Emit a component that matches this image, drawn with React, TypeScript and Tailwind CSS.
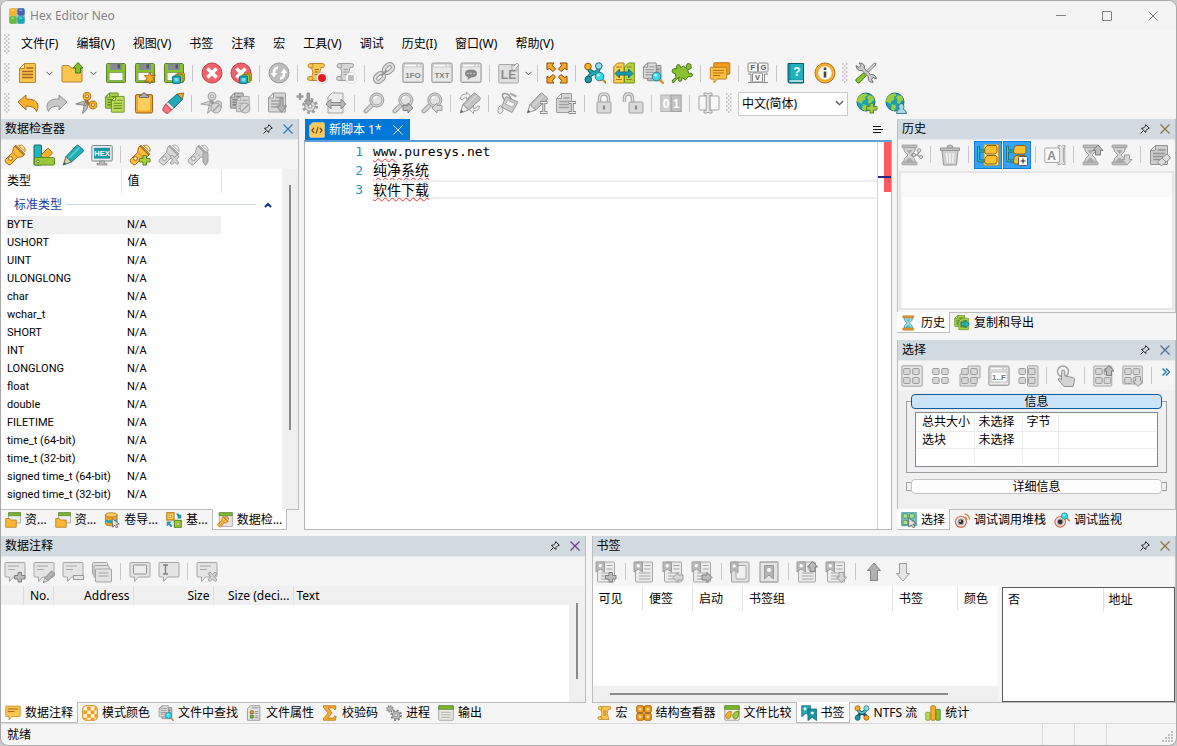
import { ReactNode } from "react";
import clsx from "clsx";

type Tone = { f: string; s: string; l?: string };

const GRAY: Tone = { f: "#d6d6d6", s: "#9c9c9c", l: "#a0a0a0" };
const DARK: Tone = { f: "#bcbcbc", s: "#7d7d7d", l: "#6f6f6f" };
const GOLD: Tone = { f: "#fbc64f", s: "#b9852c", l: "#a8641c" };
const LIME: Tone = { f: "#a5cf43", s: "#5d8a20", l: "#4c7a14" };
const TEAL: Tone = { f: "#1fb0b8", s: "#17707c", l: "#17707c" };

/* ---------- icon parts, all drawn on a 22x22 grid ---------- */

function At({ x = 0, y = 0, k = 1, children }: { x?: number; y?: number; k?: number; children: ReactNode }) {
  return <g transform={`translate(${x} ${y}) scale(${k})`}>{children}</g>;
}

function Page({ t, w = 16, h = 20 }: { t: Tone; w?: number; h?: number }) {
  return (
    <g>
      <path d={`M5.5.5H${w - 1}q.5 0 .5.5V${h - 1}q0 .5-.5.5H1q-.5 0-.5-.5V5.5z`} fill={t.f} stroke={t.s} />
      <path d="M5.5.5v5h-5z" fill="#fff" fillOpacity=".5" stroke={t.s} />
      <path d={`M7.5 5h${w - 10}M3 8.500h${w - 6}M3 11.500h${w - 6}M3 14.500h${w - 6}`} stroke={t.l} strokeWidth="1.400" />
    </g>
  );
}

function Floppy() {
  return (
    <g>
      <path d="M2.500 1.500h17l1 1v17q0 1-1 1h-17q-1 0-1-1v-17q0-1 1-1z" fill="#86c232" stroke="#5b7f2b" />
      <path d="M5 1.500h12v6.500H5z" fill="#858a90" />
      <path d="M12.500 2.500h2.500v4h-2.500z" fill="#53585e" />
      <path d="M4 10.500h14v8H4z" fill="#fbfbf4" stroke="#8aa564" />
    </g>
  );
}

function Cubes() {
  return (
    <g strokeWidth=".8">
      <rect x="14" y="11" width="7.500" height="8" rx="1" fill="#f6a21b" stroke="#9c6412" />
      <rect x="12" y="12.500" width="8" height="8" rx="1" fill="#8fc63a" stroke="#55801c" />
      <rect x="9.500" y="14" width="8" height="7.500" rx="1" fill="#1aa6be" stroke="#10647a" />
      <rect x="11.500" y="16" width="4" height="3.500" fill="#7fdbe8" />
    </g>
  );
}

function Scroll({ t }: { t: Tone }) {
  return (
    <g fill={t.f} stroke={t.s} strokeLinejoin="round">
      <path d="M5 1.500h11.500q2 0 2 2t-2 2H15q-2.500 5 0 9.500l1 3.500H4.500q-3 0-3-2t2.500-2h2Q8 10 5.500 6z" />
      <path d="M5 1.500q-3 0-3 2.300t3 2.200q2 0 2-2.200T5 1.500zM4.500 18.500q2.500 0 2.500-2t-2.500-2" />
      <path d="M8.500 7.500h4.500M8.500 10h4M8.500 12.500h4" stroke={t.l} />
    </g>
  );
}

function Scissors({ a, b }: { a: Tone; b: Tone }) {
  return (
    <g>
      <path d="M.8 12l9-3 3.500 2.500-2 2zM7.500 21.500L9.800 10.500l3.500 1-1.500 6z" fill={a.f} stroke={a.s} strokeWidth=".9" strokeLinejoin="round" />
      <path d="M11 7.500l2 4 3 .5" stroke={b.s} strokeWidth="3" fill="none" />
      <g fill="none" stroke={b.s} strokeWidth="3.400">
        <circle cx="12" cy="4.300" r="2.700" />
        <circle cx="18" cy="13" r="2.700" />
      </g>
      <g fill="none" stroke={b.f} strokeWidth="1.700">
        <circle cx="12" cy="4.300" r="2.700" />
        <circle cx="18" cy="13" r="2.700" />
      </g>
    </g>
  );
}

function Pencil({ body, tip }: { body: Tone; tip: string }) {
  return (
    <g strokeLinejoin="round" strokeWidth=".9">
      <path d="M4 12.500L14.500 1.500q1-1 2 0l4.500 4q1 1 0 2.200L9.500 18z" fill={body.f} stroke={body.s} />
      <path d="M4 12.500l5.500 5.500-8.300 3z" fill={tip} stroke={body.s} />
      <path d="M6.500 14.500L17.500 3.500" stroke="#fff" strokeOpacity=".35" strokeWidth="1.500" />
      <path d="M1.200 21l1.200-3 1.800 1.800z" fill="#555" />
    </g>
  );
}

function Lens({ t = GRAY, glass = "#e2e2e2" }: { t?: Tone; glass?: string }) {
  return (
    <g>
      <path d="M8.500 13.500L2.800 19.200" stroke={t.s} strokeWidth="4.500" strokeLinecap="round" />
      <path d="M8.500 13.500L2.800 19.200" stroke={t.f} strokeWidth="2.500" strokeLinecap="round" />
      <circle cx="13.800" cy="8" r="7" fill={t.f} stroke={t.s} />
      <circle cx="13.800" cy="8" r="5" fill={glass} stroke={t.s} strokeWidth=".8" />
      <path d="M11 7q.5-2 3-2.300" fill="none" stroke="#fff" strokeWidth="1.300" />
    </g>
  );
}

// magnifier with the handle to the lower right
function MiniLens() {
  return (
    <g>
      <path d="M17.500 17.500l3.500 3.500" stroke="#e08a1a" strokeWidth="2.400" strokeLinecap="round" />
      <circle cx="14.500" cy="14.500" r="4.300" fill="#33dcec" stroke="#2b7f96" />
      <circle cx="13.500" cy="13.200" r="1.300" fill="#d7fbff" />
    </g>
  );
}

function Plus({ t = LIME }: { t?: Tone }) {
  return <path d="M14 11.500h3.500V14.500h3.500V18h-3.500v3H14v-3h-3.500v-3.500H14z" fill={t.f} stroke={t.s} />;
}

function Cross() {
  return <path d="M12 12.500l2-1.500 2.500 2.500L19 11l2 1.500-2.500 3.200 2.500 3.300-2 1.500-2.500-2.500L14 20.500l-2-1.500 2.500-3.300z" fill="#d0d0d0" stroke="#a0a0a0" />;
}

function Up({ t = DARK }: { t?: Tone }) {
  return <path d="M5 0l5 5.500H7.500V10h-5V5.500H0z" fill={t.f} stroke={t.s} strokeLinejoin="round" />;
}

function Down({ t = GRAY }: { t?: Tone }) {
  return <path d="M5 10l5-5.500H7.500V0h-5v4.500H0z" fill={t.f} stroke={t.s} strokeLinejoin="round" />;
}

function Right({ t = DARK }: { t?: Tone }) {
  return <path d="M10 5L5 10V7.500H0v-5h5V0z" fill={t.f} stroke={t.s} strokeLinejoin="round" />;
}

function Left({ t = GRAY }: { t?: Tone }) {
  return <path d="M0 5l5 5V7.500h5v-5H5V0z" fill={t.f} stroke={t.s} strokeLinejoin="round" />;
}

function Ban() {
  return (
    <g fill="#d6d6d6" stroke="#a3a3a3">
      <circle cx="16" cy="16" r="5" />
      <path d="M12.500 19.500l7-7" strokeWidth="1.500" />
    </g>
  );
}

function Torch({ t, beam }: { t: Tone; beam: string }) {
  return (
    <g strokeLinejoin="round">
      <path d="M14.500 1.500q3-1.500 5.200 1t1.300 5z" fill={beam} stroke={t.s} strokeWidth=".8" />
      <path d="M1.500 15.500L8.500 8.500l1-5 2.500-2.300 8.800 8.800-2.300 2.500-5 1-7 7q-1.500 1-3-.5l-2-2q-.8-1.500 0-2.500z" fill={t.f} stroke={t.s} />
      <path d="M11 2l9 9" stroke={t.s} strokeWidth="1.200" />
      <path d="M9 8.500l4.500 4.500" stroke={t.s} strokeWidth=".8" />
      <circle cx="6.500" cy="14.500" r="2" fill="#fff" fillOpacity=".6" stroke={t.s} />
    </g>
  );
}

function Windowed({ children }: { children: ReactNode }) {
  return (
    <g>
      <rect x=".8" y="1" width="20.400" height="19.500" rx="1.500" fill="#d0d0d0" stroke="#a0a0a0" />
      <path d="M2 5.500h18v13.500H2z" fill="#e9e9e9" />
      <path d="M3 3.500h11M16 3.500h1.500M19 3.500h.5" stroke="#fff" strokeWidth="1.500" />
      {children}
    </g>
  );
}

function Globe() {
  return (
    <g>
      <circle cx="10" cy="10" r="9" fill="#1c9ebd" stroke="#17697c" />
      <path d="M3 4.500q3-3.500 7-3l1.500 2L9 5l.5 2.500-3 1.500-1 3-2.500-1.500-2-1q0-3 2-5zM13 3l4 1.500 1.500 4-2.500.5-1.500 3.500-2.500-2 .5-3-1.500-2zM7 12l4 1.500-.5 3L8.500 19l-2.500-2z" fill="#9bd03c" />
    </g>
  );
}

function Bubble({ t = GRAY }: { t?: Tone }) {
  return <path d="M2 1.500h18q1 0 1 1V15q0 1-1 1H9.500l-4 4.500V16H2q-1 0-1-1V2.500q0-1 1-1z" fill={t.f} stroke={t.s} strokeLinejoin="round" />;
}

const PALE: Tone = { f: "#e4e4e4", s: "#a6a6a6" };

function Folder({ t = GOLD }: { t?: Tone }) {
  return <path d="M1 4.500q0-1 1-1h6l2 2.500h10q1 0 1 1v12q0 1-1 1H2q-1 0-1-1z" fill={t.f} stroke={t.s} />;
}

function Hourglass({ t = GRAY, cap }: { t?: Tone; cap?: string }) {
  return (
    <g>
      <path d="M4 3.500h12q0 4.500-4.500 7.500Q16 14 16 18.500H4Q4 14 8.500 11 4 8 4 3.500z" fill={t.f} stroke={t.s} />
      <path d="M7 6h6l-3 4zM6 18q1-3 4-4.500Q13 15 14 18z" fill={cap ? "#4fc3cf" : "#a9a9a9"} />
      <rect x="2.500" y="1" width="15" height="2.800" rx=".6" fill={cap ?? "#bdbdbd"} stroke={cap ? "#a86a14" : "#999"} strokeWidth=".8" />
      <rect x="2.500" y="18" width="15" height="2.800" rx=".6" fill={cap ?? "#bdbdbd"} stroke={cap ? "#a86a14" : "#999"} strokeWidth=".8" />
    </g>
  );
}

function Cells({ t = GRAY, gap = 10 }: { t?: Tone; gap?: number }) {
  return (
    <g fill={t.f} stroke={t.s}>
      <rect x="3.500" y="3.500" width="6.500" height="6" rx="1" />
      <rect x={gap + 3.5} y="3.500" width="6.500" height="6" rx="1" />
      <rect x="3.500" y="12.500" width="6.500" height="6" rx="1" />
      <rect x={gap + 3.5} y="12.500" width="6.500" height="6" rx="1" />
    </g>
  );
}

function Mark({ t = GRAY }: { t?: Tone }) {
  return (
    <g>
      <rect x="2.500" y="1" width="17" height="20" rx="1" fill="#ebebeb" stroke="#a6a6a6" />
      <path d="M11.500 4.500h6M11.500 8h6M6 12h11.500M6 15h11.500M6 18h11.500" stroke="#a6a6a6" />
      <path d="M1 1h8.500v10L5.200 8 1 11z" fill="#b8b8b8" stroke={t.s} />
      <circle cx="5.200" cy="4.800" r="1.700" fill="#fff" />
    </g>
  );
}

function Tree({ plus }: { plus?: boolean }) {
  return (
    <g>
      {!plus && <rect x="7" y=".8" width="14.500" height="20.400" rx="1" fill="#fff2b8" stroke="#c79a2c" />}
      <path d="M1.500 2v13.500q0 1.500 1.500 1.500H9M2 7h7" fill="none" stroke="#1b6d72" strokeWidth="3" />
      <path d="M1.500 2.500v13q0 1.500 1.500 1.500H8M2 7h6" fill="none" stroke="#3cc7c4" strokeWidth="1.200" />
      <path d="M8 4l2-2.500h9l1 1.500v5.500L18 10H9L7.500 8z" fill="#fbc02d" stroke="#8f5f10" />
      <path d="M8 14l2-2.500h9l1 1.500v5.500L18 20H9L7.500 18z" fill="#fbc02d" stroke="#8f5f10" />
      {plus && (
        <g>
          <rect x="12.500" y="12.500" width="9" height="9" rx="1" fill="#fff" stroke="#555" />
          <path d="M17 14.500v5M14.500 17h5" stroke="#222" />
        </g>
      )}
    </g>
  );
}

function GearShape({ t = DARK }: { t?: Tone }) {
  return (
    <g>
      <circle cx="12" cy="12" r="6" fill="none" stroke={t.s} strokeWidth="4" strokeDasharray="2.400 2.300" />
      <circle cx="12" cy="12" r="5.300" fill={t.f} stroke={t.s} />
      <circle cx="12" cy="12" r="2" fill="#f5f5f5" stroke={t.s} />
    </g>
  );
}

const label = "font-[Liberation_Sans,sans-serif] font-bold";

const icons: Record<string, ReactNode> = {
  logo: (
    <g>
      <rect x="0" y="0" width="22" height="22" rx="3" fill="#2f6f4b" fillOpacity=".35" />
      <rect x=".5" y=".5" width="10" height="10" rx="2.500" fill="#f5b324" />
      <rect x="11.500" y=".5" width="10" height="10" rx="2.500" fill="#4861b8" />
      <rect x=".5" y="11.500" width="10" height="10" rx="2.500" fill="#67b93a" />
      <rect x="11.500" y="11.500" width="10" height="10" rx="2.500" fill="#1ba7b9" />
      <path d="M3 3h4M14 3h4M3 14h4M14 14h4" stroke="#fff" strokeOpacity=".45" strokeWidth="2" />
    </g>
  ),
  newFile: <At x={2} y={1}><Page t={GOLD} w={17} /></At>,
  open: (
    <g>
      <Folder />
      <path d="M17 .5l5 5.500h-2.500v5h-5V6H12z" fill="#7fc02e" stroke="#3c7d14" />
    </g>
  ),
  save: <Floppy />,
  saveAs: (
    <g>
      <Floppy />
      <path d="M16 10l1.300 3.800 4.200-.6-2.800 3 2.500 3.800-3.700-1.200L16 22l-1.500-3.200-4 1 2.300-3.500-2.600-3 4 .5z" fill="#f9a825" stroke="#9a5f12" strokeWidth=".8" />
    </g>
  ),
  saveAll: <g><Floppy /><Cubes /></g>,
  close: (
    <g>
      <circle cx="11" cy="11" r="10" fill="#f0616b" stroke="#b4464e" />
      <path d="M6.500 6.500l9 9M15.500 6.500l-9 9" stroke="#fff" strokeWidth="3.600" />
    </g>
  ),
  closeAll: (
    <g>
      <circle cx="11" cy="11" r="10" fill="#f0616b" stroke="#b4464e" />
      <path d="M6.500 6.500l9 9M15.500 6.500l-9 9" stroke="#fff" strokeWidth="3.600" />
      <Cubes />
    </g>
  ),
  refresh: (
    <g>
      <circle cx="11" cy="11" r="10" fill="#bdbdbd" stroke="#9b9b9b" />
      <path d="M10 5.500Q5.500 6 6 12M12 16.500q4.500-.5 4-6.500" fill="none" stroke="#fff" strokeWidth="2.500" />
      <path d="M2.800 11h6.400L6 15.500zM12.800 11h6.400L16 6.500z" fill="#fff" />
    </g>
  ),
  record: (
    <g>
      <Scroll t={GOLD} />
      <circle cx="16" cy="16" r="5.500" fill="#fff" stroke="#c9c9c9" strokeWidth=".8" />
      <circle cx="16" cy="16" r="4" fill="#e31b23" />
    </g>
  ),
  recordStop: (
    <g>
      <Scroll t={GRAY} />
      <circle cx="16" cy="16" r="5.500" fill="#fff" stroke="#d4d4d4" strokeWidth=".8" />
      <rect x="13" y="13" width="6" height="6" fill="#bdbdbd" />
    </g>
  ),
  link: (
    <g fill="none">
      <g stroke="#949494" strokeWidth="4.200">
        <rect x="-5" y="-3.200" width="10" height="6.400" rx="3.200" transform="translate(15.500 6.500) rotate(-42)" />
        <rect x="-5" y="-3.200" width="10" height="6.400" rx="3.200" transform="translate(6.500 15.500) rotate(-42)" />
      </g>
      <g stroke="#dedede" strokeWidth="2.200">
        <rect x="-5" y="-3.200" width="10" height="6.400" rx="3.200" transform="translate(15.500 6.500) rotate(-42)" />
        <rect x="-5" y="-3.200" width="10" height="6.400" rx="3.200" transform="translate(6.500 15.500) rotate(-42)" />
      </g>
      <path d="M8 13.500l6-5" stroke="#949494" strokeWidth="2" />
    </g>
  ),
  info1fo: <Windowed><text x="11" y="15.500" textAnchor="middle" fontSize="8" fill="#808080" className={label}>1FO</text></Windowed>,
  txt: <Windowed><text x="11" y="15.500" textAnchor="middle" fontSize="8" fill="#808080" className={label}>TXT</text></Windowed>,
  chatWin: (
    <Windowed>
      <path d="M11 7.500q6 0 6 4t-6 4l-3.500 2.500.5-3q-3-.5-3-3.500 0-4 6-4z" fill="#858585" />
      <path d="M7.500 11.500h1M10.500 11.500h1M13.500 11.500h1" stroke="#eee" strokeWidth="1.500" />
    </Windowed>
  ),
  endian: (
    <g>
      <rect x=".8" y="2.500" width="19.500" height="18.500" rx="1" fill="#e0e0e0" stroke="#a6a6a6" />
      <text x="10.500" y="17" textAnchor="middle" fontSize="12" fill="#8d8d8d" className={label}>LE</text>
      <path d="M14 8V2.500l1.800 1.800L19 1l2 2-3.300 3.200L19.500 8z" fill="#f0f0f0" stroke="#9a9a9a" strokeWidth=".9" />
    </g>
  ),
  expand: (
    <g fill="#f9a825" stroke="#8a4b12" strokeLinejoin="round">
      {[0, 90, 180, 270].map((a) => (
        <path key={a} transform={`rotate(${a} 11 11)`} d="M1 1H8L6.300 3.300 9.500 7 7 9.500 3.300 6.300 1 8z" />
      ))}
    </g>
  ),
  structure: (
    <g>
      <path d="M4.500 5Q5 10.500 11 11q5.500.5 6.500 5M15 5q-.5 5-4 6-5.500 1-6.500 5.500" fill="none" stroke="#14616d" strokeWidth="4" />
      <path d="M4.500 5Q5 10.500 11 11M15 5q-.5 5-4 6-5.500 1-6.500 5.500" fill="none" stroke="#1fa7b4" strokeWidth="2.400" />
      <circle cx="4" cy="4.500" r="3.300" fill="#fbab27" stroke="#8d5913" />
      <circle cx="14.800" cy="4" r="3.300" fill="#8ddbe3" stroke="#236f82" />
      <circle cx="4.300" cy="17.500" r="3.300" fill="#1a9aa7" stroke="#0f5763" />
      <At x={1} y={0}><MiniLens /></At>
    </g>
  ),
  compare: (
    <g>
      <path d="M4.500 1H11v20H.8V4.800z" fill="#ffd34f" stroke="#a87c1d" />
      <path d="M15.500 1H21.300v20H11.500V5z" fill="#b4d33f" stroke="#71911f" />
      <path d="M3 5h6M14 5h5M3 17.500h6M13.500 17.500h5.500" stroke="#a87c1d" />
      <path d="M2 11.500L6.500 7v3h9V7l4.500 4.500L15.500 16v-3h-9v3z" fill="#14a0b0" stroke="#0f5e6b" strokeWidth=".8" />
    </g>
  ),
  findFiles: (
    <g>
      <At x={5} y={3} k={0.85}><Page t={DARK} w={17} h={19} /></At>
      <At x={1} y={0.5} k={0.85}><Page t={{ f: "#dcdcdc", s: "#808080", l: "#909090" }} w={16} h={19} /></At>
      <MiniLens />
    </g>
  ),
  puzzle: <path d="M2 7l4-.5q-1.500-3.500 1-4 2.500-.2 2.500 3.300L12.500 4l3 2.500q.5-1-.3-3Q16 1 18 1.500q3 .8 2 3.300 1.500 1.500-1.500 2.500l-2 .3 1.500 4.200q2-1.500 3.200.2.800 2.200-1 2.800-1.500.3-2.500-.8L14.500 18l-3.300-2.500q-.2 2.500-1 3.500-2 1-3-1 0-2 1.300-3L4.500 18q-1 3-3 2.500-1-1.500.5-3l3-1.500-.5-4Q1 11 1 9z" fill="#86c232" stroke="#4c7d1a" />,
  comments: (
    <g>
      <At x={4} y={-0.5} k={0.8}><Bubble t={{ f: "#f39c1f", s: "#a0640f" }} /></At>
      <At x={0.5} y={4} k={0.82}><Bubble t={{ f: "#ffbe3b", s: "#b0701a" }} /></At>
      <path d="M4 8.500h11M4 11h11M4 13.500h7" stroke="#b5701a" />
    </g>
  ),
  keys: (
    <g>
      <g fill="#f7f7f7" stroke="#8c8c8c">
        <rect x="1" y="1" width="9.500" height="9" rx="1" />
        <rect x="11.500" y="1" width="9.500" height="9" rx="1" />
        <rect x="5.500" y="11" width="10" height="9" rx="1" />
        <path d="M1 20.500h3V12H1M21 20.500h-3.500V12H21M3 20.500h16" fill="none" />
      </g>
      <g fontSize="7.500" fill="#555" textAnchor="middle" className={label}>
        <text x="5.800" y="8.200">F</text>
        <text x="16.300" y="8.200">G</text>
        <text x="10.500" y="18.200">V</text>
      </g>
    </g>
  ),
  help: (
    <g>
      <path d="M3 1.500h15.500V21H4.500q-1.500 0-1.500-2z" fill="#16919e" stroke="#0d5865" />
      <path d="M5.500 2H18v15.500H5.500z" fill="#1fb2bb" />
      <path d="M4.500 19h13.500" stroke="#d8f4f4" strokeWidth="1.500" />
      <text x="11.800" y="14" textAnchor="middle" fontSize="12" fill="#fff" className={label}>?</text>
    </g>
  ),
  about: (
    <g>
      <circle cx="11" cy="11" r="10" fill="#fbb02d" stroke="#b3741a" />
      <circle cx="11" cy="11" r="7.200" fill="#fffdf5" stroke="#d69a34" strokeWidth=".7" />
      <path d="M11 5.500v2.500" stroke="#444" strokeWidth="2.600" />
      <path d="M11 9.500v6" stroke="#444" strokeWidth="2.600" />
    </g>
  ),
  tools: (
    <g strokeLinejoin="round">
      <path d="M21 1.500l-1.500-.5L12 8.500l1.500 1.500 7-7z" fill="#ddd" stroke="#777" />
      <path d="M1 3.500l3 2 1.800-1.800L4 1q4-.5 5.500 3l-.3 2.300 6.300 6.300q4-.8 5.500 2.400l.3 2-3-1.500-1.800 1.800 1.700 3q-4 .5-5-3.200l.2-2.300-6.400-6.300Q2 9.500 1 3.500z" fill="#cacaca" stroke="#6f6f6f" />
      <path d="M8.500 11l2.700 2.700-6.500 7q-1.500.8-3-.7t-.5-2.800z" fill="#86c232" stroke="#4c7d1a" />
    </g>
  ),
  undo: <path d="M1 10L9 3v4q11-.5 12 6.500.2 3-1.500 6Q18 14 9 14v4z" fill="#fbb02d" stroke="#a9701c" strokeLinejoin="round" />,
  redo: <path d="M21 10l-8-7v4Q2 6.500 1 13.500q-.2 3 1.500 6Q4 14 13 14v4z" fill="#c8c8c8" stroke="#949494" strokeLinejoin="round" />,
  cut: <Scissors a={DARK} b={{ f: "#fbb02d", s: "#a9701c" }} />,
  copy: (
    <g>
      <At x={1} y={0.5} k={0.85}><Page t={LIME} w={16} h={19} /></At>
      <At x={7} y={4} k={0.85}><Page t={{ f: "#c0dc5a", s: "#5d8a20", l: "#5d8a20" }} w={16} h={19.5} /></At>
    </g>
  ),
  paste: (
    <g>
      <rect x="2.500" y="2.500" width="17" height="18.500" rx="1.500" fill="#f0a52c" stroke="#9c6719" />
      <rect x="5" y="5" width="12" height="13.500" fill="#ffcf5c" />
      <path d="M6.500 5.500V3.500H8.500Q9 .8 11 .8t2.500 2.700h2v2z" fill="#a9adb3" stroke="#6c7077" />
    </g>
  ),
  erase: (
    <g strokeLinejoin="round" strokeWidth=".9">
      <path d="M15 2l6.500-1-1 6.500z" fill="#f0a63c" stroke="#8c5a1a" />
      <path d="M6 10L15 2l5.500 5.500L12 16z" fill="#22a9b4" stroke="#126874" />
      <path d="M6 10l6 6-2.300 2-6-6z" fill="#e5e5e5" stroke="#888" />
      <path d="M3.700 12l6 6-3.500 3q-1.500 1-3-.5l-2-1.500q-1-1.500 0-3z" fill="#f8737d" stroke="#b0404a" />
    </g>
  ),
  cutOff: <g><Scissors a={GRAY} b={GRAY} /><Ban /></g>,
  copyOff: (
    <g>
      <At x={1} y={0.5} k={0.85}><Page t={DARK} w={16} h={19} /></At>
      <At x={7} y={4} k={0.85}><Page t={GRAY} w={16} h={19} /></At>
      <Ban />
    </g>
  ),
  docDown: (
    <g>
      <At x={1} y={0.5}><Page t={GRAY} w={18} h={20} /></At>
      <path d="M16 6v8h3.500l-5 6.500-5-6.500H13V6z" fill="#b5b5b5" stroke="#888" />
    </g>
  ),
  gearDown: (
    <g>
      <At x={2} y={2}><GearShape t={GRAY} /></At>
      <path d="M4 1v7M.5 4.500h7" stroke="#9a9a9a" strokeWidth="2.400" />
      <path d="M11 1h2.500v8H17l-4.500 5L8 9h3z" fill="#a8a8a8" stroke="#808080" strokeWidth=".8" />
    </g>
  ),
  docWidth: (
    <g>
      <path d="M7 1h11v20H3V5z" fill="#ececec" stroke="#a6a6a6" />
      <path d="M1 12l5-5v3.500h10V7l5 5-5 5v-3.500H6V17z" fill="#b9b9b9" stroke="#8a8a8a" />
    </g>
  ),
  find: <Lens />,
  findNext: <g><Lens /><At x={11} y={11}><Right /></At></g>,
  findPrev: <g><Lens /><At x={11} y={11}><Left /></At></g>,
  replace: (
    <g>
      <Pencil body={{ f: "#c2c2c2", s: "#8a8a8a" }} tip="#eee" />
      <path d="M1.500 7q0-5 6-5V0l4 3.800-4 3.700V5.500Q4 5.500 3.500 8zM20.500 14q0 5-6 5v2.500l-4-3.800 4-3.700v2.500q3.500 0 4-2.500z" fill="#f0f0f0" stroke="#9a9a9a" strokeWidth=".9" />
    </g>
  ),
  fill: (
    <g strokeLinejoin="round">
      <path d="M9 4.500l12 5.500-6 10.500-10.500-5.500z" fill="#cecece" stroke="#949494" />
      <path d="M10.500 8l7.500 3.500-2.500 4-7-3.500z" fill="#f2f2f2" stroke="#aaa" />
      <path d="M7.500 8Q3 1 8 1.500T14 8" fill="none" stroke="#989898" strokeWidth="1.500" />
      <path d="M3.500 13.500q2.500 3.500 2.500 5T3.500 21.200 1 18.500 3.500 13.500z" fill="#e6e6e6" stroke="#a0a0a0" />
      <path d="M13 1.500l6.500 3" stroke="#aaa" strokeWidth="2" />
    </g>
  ),
  insertEdit: (
    <g>
      <Pencil body={{ f: "#c2c2c2", s: "#8a8a8a" }} tip="#eee" />
      <path d="M14 10.500h7.500M14 20.500h7.500M17.800 10.500v10" stroke="#8a8a8a" strokeWidth="3" />
      <path d="M14.500 10.500h6.500M14.500 20.500h6.500M17.800 10.500v10" stroke="#eee" />
    </g>
  ),
  insertFile: (
    <g>
      <At x={1} y={1}><Page t={GRAY} w={16} h={20} /></At>
      <path d="M13.500 10.500h7.500M13.500 20.500h7.500M17.300 10.500v10" stroke="#8a8a8a" strokeWidth="3" />
      <path d="M14 10.500h6.500M14 20.500h6.500M17.300 10.500v10" stroke="#eee" />
    </g>
  ),
  lock: (
    <g>
      <path d="M6.500 11V6.500q0-4.500 4.500-4.500t4.500 4.500V11" fill="none" stroke="#a0a0a0" strokeWidth="3.400" />
      <path d="M6.500 11V6.500q0-4.500 4.500-4.500t4.500 4.500V11" fill="none" stroke="#dedede" strokeWidth="1.500" />
      <rect x="4" y="10" width="14" height="11" rx="1" fill="#d9d9d9" stroke="#a3a3a3" />
      <path d="M11 13.500v4" stroke="#8b8b8b" strokeWidth="2.200" />
    </g>
  ),
  unlock: (
    <g>
      <path d="M2.500 10V6Q2.500 2 6.500 2t4 4v5" fill="none" stroke="#a0a0a0" strokeWidth="3.400" />
      <path d="M2.500 10V6Q2.500 2 6.500 2t4 4v5" fill="none" stroke="#dedede" strokeWidth="1.500" />
      <rect x="7" y="10" width="14" height="11" rx="1" fill="#d9d9d9" stroke="#a3a3a3" />
      <path d="M14 13.500v4" stroke="#8b8b8b" strokeWidth="2.200" />
    </g>
  ),
  binary: (
    <g>
      <rect x=".8" y="3" width="10" height="16.500" fill="#d0d0d0" stroke="#b5b5b5" />
      <rect x="11.200" y="3" width="10" height="16.500" fill="#c0c0c0" stroke="#a3a3a3" />
      <g fontSize="12" fill="#fff" textAnchor="middle" className={label}>
        <text x="6" y="15.500">0</text>
        <text x="16.200" y="15.500">1</text>
      </g>
    </g>
  ),
  columns: (
    <g>
      <rect x="1" y="4" width="8" height="14" rx="1" fill="#f8f8f8" stroke="#a3a3a3" />
      <rect x="12" y="4" width="9" height="14" rx="1" fill="#f8f8f8" stroke="#a3a3a3" />
      <path d="M6 1h3l1 1 1-1h3v2.500h-2.200v15H14V21h-3l-1-1-1 1H6v-2.500h2.200v-15H6z" fill="#e3e3e3" stroke="#a3a3a3" />
    </g>
  ),
  globeAdd: <g><Globe /><Plus /></g>,
  globeUser: (
    <g>
      <Globe />
      <path d="M11.500 21.500q0-4 3-4.500-1-1-.8-3 .3-2.500 2.600-2.500t2.600 2.500q.2 2-.8 3 3 .5 3.400 4.500z" fill="#a9d8e3" stroke="#2f7485" strokeWidth=".9" />
    </g>
  ),
  torch: <Torch t={{ f: "#fdbb3b", s: "#a8681c" }} beam="#ffec8a" />,
  swatches: (
    <g>
      <rect x="1" y="1" width="7.500" height="20" rx="1" fill="#23b3be" stroke="#146b77" />
      <path d="M8.500 10.500l6-6q1-.5 1.500.3l3 3.500q.5.7 0 1.500L9 18.500z" fill="#fbb02d" stroke="#a9701c" />
      <rect x="1.500" y="13.500" width="20" height="7.500" rx="1" fill="#9aca3c" stroke="#5d8a20" />
      <circle cx="5" cy="17.500" r="1.300" fill="#fff" stroke="#4c7a14" strokeWidth=".8" />
    </g>
  ),
  pencil: <Pencil body={TEAL} tip="#f0c98a" />,
  hex: (
    <g>
      <rect x=".8" y="1.500" width="20.400" height="15.500" rx="1" fill="#e9e9e9" stroke="#7c8a8c" />
      <rect x="3" y="3.800" width="16" height="10.800" fill="#1798a6" />
      <path d="M8.500 17h5v2.500h2.500v1.500H6v-1.500h2.500z" fill="#b8b8b8" stroke="#888" strokeWidth=".7" />
      <text x="11" y="12" textAnchor="middle" fontSize="7.500" fill="#fff" className={label}>HEX</text>
    </g>
  ),
  torchAdd: <g><Torch t={{ f: "#fdbb3b", s: "#a8681c" }} beam="#ffec8a" /><Plus /></g>,
  torchDel: <g><Torch t={GRAY} beam="#eee" /><Cross /></g>,
  torchEdit: (
    <g>
      <Torch t={GRAY} beam="#eee" />
      <path d="M16 8.500q3-1.500 5 0V18l-2.500 3.500L16 18z" fill="#b9b9b9" stroke="#9a9a9a" />
    </g>
  ),
  histTree: (
    <g>
      <At x={-1.5}><Hourglass /></At>
      <path d="M12 11h4.500l1.500-4M16.500 11l3 2.500" fill="none" stroke="#989898" strokeWidth="1.400" />
      <g fill="#ddd" stroke="#989898">
        <circle cx="18" cy="6.500" r="1.800" />
        <circle cx="13" cy="11" r="1.600" />
        <circle cx="20" cy="13" r="1.600" />
      </g>
    </g>
  ),
  trash: (
    <g>
      <path d="M3 6.500h16l-1.500 14.500h-13z" fill="#d0d0d0" stroke="#969696" />
      <path d="M7.500 9l1 10M11 9v10M14.500 9l-1 10" stroke="#f5f5f5" strokeWidth="1.500" />
      <path d="M1.500 4h19v2.500h-19zM8 4q0-3 3-3t3 3" fill="#c4c4c4" stroke="#909090" />
    </g>
  ),
  tree: <Tree />,
  treePlus: <Tree plus />,
  rename: (
    <g>
      <rect x=".8" y="4" width="20" height="14.500" rx="1" fill="#fafafa" stroke="#a9a9a9" />
      <text x="7.500" y="15.500" textAnchor="middle" fontSize="12" fill="#8b8b8b" className={label}>A</text>
      <path d="M14 1.500h2.500l1 1 1-1H21V4h-1.500v14H21v2.500h-2.500l-1-1-1 1H14V18h1.500V4H14z" fill="#e3e3e3" stroke="#9b9b9b" strokeWidth=".8" />
    </g>
  ),
  histUp: <g><At x={-1.5}><Hourglass /></At><At x={11} y={1}><Up /></At></g>,
  histDown: <g><At x={-1.5}><Hourglass /></At><At x={11} y={11}><Down /></At></g>,
  docErase: (
    <g>
      <At x={1} y={1}><Page t={{ f: "#cdcdcd", s: "#939393", l: "#929292" }} w={18} /></At>
      <path d="M9 17.500l8-7q1-.5 2 .5l2 2q.5 1-.3 2L13.500 21q-1 .8-2 0l-2.500-2q-.8-.8 0-1.500z" fill="#dedede" stroke="#8d8d8d" />
      <path d="M13 14l4 4" stroke="#8d8d8d" />
    </g>
  ),
  hourglass: <Hourglass t={{ f: "#a7e0e6", s: "#3d7f8c" }} cap="#f5a02a" />,
  copyExport: (
    <g>
      <At x={0.5} y={0} k={0.85}><Page t={LIME} w={17} h={19} /></At>
      <At x={6} y={4} k={0.85}><Page t={LIME} w={17} h={19.5} /></At>
      <At x={10} y={7} k={1.1}><Right t={TEAL} /></At>
    </g>
  ),
  selAll: <g><rect x=".8" y=".8" width="20.400" height="20.400" rx="1" fill="#e4e4e4" stroke="#a6a6a6" /><At x={-0.8}><Cells gap={9} /></At></g>,
  selNone: <At x={-0.8}><Cells gap={9} /></At>,
  selInvert: (
    <g>
      <path d="M9 1h12v12h-4v8H1V9h8z" fill="#e0e0e0" stroke="#a6a6a6" />
      <At x={-0.8}><Cells gap={9} /></At>
    </g>
  ),
  selRange: <Windowed><rect x="3" y="7" width="16" height="10" fill="#fff" stroke="#bbb" /><text x="11" y="15" textAnchor="middle" fontSize="8" fill="#777" className={label}>1..F</text></Windowed>,
  selColumn: <g><rect x="10.500" y=".8" width="10.500" height="20.400" rx="1" fill="#dcdcdc" stroke="#a6a6a6" /><At x={-1.5}><Cells gap={9.5} /></At></g>,
  touch: (
    <g strokeLinejoin="round">
      <circle cx="8" cy="6.500" r="5.500" fill="none" stroke="#a3a3a3" strokeWidth="1.500" />
      <path d="M6.500 15V6.500q0-1.500 1.600-1.500T9.800 6.500V11l8 1.500q2 .5 1.700 2.500L18 21.500H9L3.500 15q-.5-2 1-1.800z" fill="#d4d4d4" stroke="#939393" />
    </g>
  ),
  selUp: <g><rect x=".8" y="1" width="18" height="20" rx="1" fill="#e4e4e4" stroke="#a6a6a6" /><At x={-0.8}><Cells gap={8.5} /></At><At x={11} y={0.5}><Up /></At></g>,
  selDown: <g><rect x=".8" y="1" width="19.500" height="18" rx="1" fill="#e4e4e4" stroke="#a6a6a6" /><At x={-0.8}><Cells gap={8.5} /></At><At x={11} y={11.5}><Down /></At></g>,
  selTab: (
    <g>
      <rect x="1" y="1" width="20" height="18" fill="#7cc6c2" stroke="#2f8c8a" />
      <At x={-0.8} y={-1}><Cells t={{ f: "#b5e07a", s: "#2c8278" }} gap={9} /></At>
      <path d="M10 8l11 8-4.500.8 2.500 4-2.500 1-2.300-4L11 21z" fill="#e3e3e3" stroke="#555" />
    </g>
  ),
  callStack: (
    <g>
      <circle cx="9.500" cy="13.500" r="7.500" fill="#fff" stroke="#dd6a58" strokeWidth="1.800" />
      <circle cx="9.500" cy="13.500" r="5" fill="#a9b4b8" />
      <circle cx="9.500" cy="13.500" r="3.200" fill="#3d2b28" />
      <circle cx="8.500" cy="12.500" r="1.200" fill="#fff" />
      <path d="M15 7q2.500 1 3 4M14.500 2.500q6 1 7 8" fill="none" stroke="#c88d3a" strokeWidth="1.800" />
    </g>
  ),
  watch: (
    <g>
      <circle cx="8.500" cy="13.500" r="7.200" fill="#fff" stroke="#dd6a58" strokeWidth="1.800" />
      <circle cx="8.500" cy="13.500" r="5" fill="#a9b4b8" />
      <circle cx="8.500" cy="13.500" r="3.200" fill="#3d2b28" />
      <At x={0} y={-9}><MiniLens /></At>
    </g>
  ),
  noteAdd: <g><Bubble t={PALE} /><path d="M4 5h11M4 8.500h7" stroke="#a8a8a8" /><Plus t={DARK} /></g>,
  noteEdit: <g><Bubble t={PALE} /><path d="M4 5h11M4 8.500h7" stroke="#a8a8a8" /><At x={9.5} y={9.5} k={0.58}><Pencil body={{ f: "#aaa", s: "#777" }} tip="#ddd" /></At></g>,
  noteDel: <g><Bubble t={PALE} /><path d="M4 5h11M4 8.500h7" stroke="#a8a8a8" /><rect x="11.500" y="14.500" width="10" height="4" fill="#e6e6e6" stroke="#999" /></g>,
  notes: (
    <g fill="#e2e2e2" stroke="#a3a3a3">
      <rect x="1.500" y="1.500" width="15" height="12" rx="1" />
      <rect x="3" y="4.500" width="15" height="12" rx="1" />
      <rect x="4.500" y="8" width="16" height="13" rx="1" />
      <path d="M7.500 12h10M7.500 15h10" />
    </g>
  ),
  noteBox: <g><Bubble t={PALE} /><rect x="4.500" y="4" width="13" height="9" rx="1" fill="#ececec" stroke="#909090" /></g>,
  noteText: <g><Bubble t={PALE} /><path d="M5 4h5M5 13h5M7.500 4v9" stroke="#808080" strokeWidth="1.400" /></g>,
  noteClear: <g><Bubble t={PALE} /><path d="M4 5h11M4 8.500h7" stroke="#a8a8a8" /><Cross /></g>,
  markAdd: <g><Mark /><Plus t={DARK} /></g>,
  mark: <Mark />,
  markPrev: <g><Mark /><At x={11} y={11.5}><Left /></At></g>,
  markNext: <g><Mark /><At x={11} y={11.5}><Right /></At></g>,
  markSel: (
    <g>
      <rect x="2.500" y="1" width="17.500" height="20" rx="1" fill="#e2e2e2" stroke="#a0a0a0" />
      <rect x="7" y="4.500" width="10" height="13.500" rx="1" fill="#f0f0f0" stroke="#a6a6a6" />
      <path d="M1.500 1H9v11l-3.700-3-3.800 3z" fill="#b8b8b8" stroke="#a0a0a0" />
      <circle cx="5.200" cy="5" r="1.600" fill="#fff" />
    </g>
  ),
  markFrame: (
    <g>
      <rect x="2" y="1" width="18" height="20" rx="1" fill="#e4e4e4" stroke="#a6a6a6" strokeWidth="1.300" />
      <path d="M6.500 4.500h9v13.500l-4.500-4-4.500 4z" fill="#b4b4b4" stroke="#999" />
      <circle cx="11" cy="9" r="2" fill="#fff" />
    </g>
  ),
  markUp: <g><Mark /><At x={11.5} y={0.5}><Up /></At></g>,
  markDown: <g><Mark /><At x={11.5} y={11.5}><Down /></At></g>,
  up: <path d="M11 2l6.500 7.500H14.500V19.500h-7V9.500H4.500z" fill="#b0b0b0" stroke="#858585" strokeLinejoin="round" />,
  down: <path d="M11 20l6.500-7.500H14.500V2.500h-7v10H4.500z" fill="#e6e6e6" stroke="#9b9b9b" strokeLinejoin="round" />,
  explorer: (
    <g>
      <rect x="5" y="1" width="16.500" height="14" fill="#ececec" stroke="#9a9a9a" />
      <path d="M5 1h16.500v4H5z" fill="#7fb83a" stroke="#57861f" />
      <path d="M1 9h5l1.500 2h8v10H1z" fill="#fbb733" stroke="#ad7417" />
    </g>
  ),
  volume: (
    <g>
      <path d="M2 4v12q0 3 8 3t8-3V4z" fill="#f5a227" stroke="#9c6719" />
      <path d="M2 8.500q0 3 8 3t8-3v4q0 3-8 3t-8-3z" fill="#26a5b5" />
      <ellipse cx="10" cy="4" rx="8" ry="3" fill="#ffd05a" stroke="#9c6719" />
      <path d="M11 9l10 7.500-4.300.6 2.300 3.700-2.300 1-2.200-3.800-2.500 3z" fill="#e3e3e3" stroke="#555" />
    </g>
  ),
  base: (
    <g>
      <rect x="1" y="1" width="10" height="10" fill="#ffc94a" stroke="#b57a17" strokeWidth="1.500" />
      <rect x="11.500" y="11.500" width="9.500" height="9.500" fill="#9bd03c" stroke="#568a1b" strokeWidth="1.500" />
      <path d="M4.500 4.500h3v3h-3zM15 15h3v3h-3z" fill="#fff" stroke="#8a6a20" strokeWidth=".7" />
      <path d="M14 2h3l2.500 2.500L21 3v6h-6l1.500-1.500zM1 13h7l-2.500 2.500L9 19l-2 2-3.500-3.500L1 20z" fill="#1b97a5" />
    </g>
  ),
  inspector: (
    <g>
      <rect x="3" y="1" width="18" height="19" fill="#e6e6e6" stroke="#9a9a9a" />
      <path d="M3 1h18v4H3z" fill="#7fb83a" stroke="#57861f" />
      <At x={0} y={5} k={0.75}><Torch t={{ f: "#fdbb3b", s: "#a8551c" }} beam="#ff9c5a" /></At>
    </g>
  ),
  script: (
    <g>
      <path d="M5 1h15q1 0 1 1v18q0 1-1 1H2q-1 0-1-1V5z" fill="#fbc95a" stroke="#ffdf8c" />
      <path d="M7 8L4 11.500 7 15M15 8l3 3.500-3 3.500M12.500 7l-3 9" fill="none" stroke="#5e4312" strokeWidth="1.500" />
    </g>
  ),
  note: <g><Bubble t={GOLD} /><path d="M4 5.500h14M4 9h9" stroke="#9b6412" strokeWidth="1.300" /></g>,
  pattern: (
    <g>
      <rect x="1" y="1" width="20" height="20" rx="5" fill="#fff4d8" stroke="#d08a1c" strokeWidth="1.500" />
      <path d="M2 7.500h5v5H2zM7 2.500h5v5H7zM12 7.500h5v5h-5zM7 12.500h5v5H7zM17 3h3v4.500h-3zM17 12.500h3.500v5H17zM2 17.500h5V20H3zM12 17.500h5V21h-5z" fill="#f39a1d" />
    </g>
  ),
  props: (
    <g>
      <path d="M6 1h13v20H2V5z" fill="#e4e4e4" stroke="#808080" />
      <path d="M6 8h4v4H6z" fill="#f5a227" stroke="#7a5312" />
      <path d="M6 14h4v4H6z" fill="#7fc02e" stroke="#3c6d14" />
      <path d="M12 9h5M12 11.500h5M12 15h5M12 17.500h5M8 4h9" stroke="#777" />
    </g>
  ),
  sigma: <path d="M2 1h17v5h-2q-.5-2-2.500-2H8.500l5.500 7-6 7h6.500q2 0 2.500-2.500h2.500L18.500 21H2v-2.500L8.500 11 2 3.500z" fill="#fbab27" stroke="#a86a14" />,
  process: (
    <g>
      <At x={2} y={2}><GearShape /></At>
      <At x={-2.5} y={-2.5} k={0.65}><GearShape /></At>
    </g>
  ),
  output: (
    <g>
      <rect x="1" y="1" width="20" height="20" rx="1" fill="#ebebe6" stroke="#8c8c8c" />
      <path d="M1 1h20v5H1z" fill="#79b530" stroke="#57861f" />
      <path d="M4 10h14M4 13.500h14M4 17h14" stroke="#999" />
    </g>
  ),
  macro: <At x={1} y={0.5} k={1.05}><Scroll t={GOLD} /></At>,
  viewer: (
    <g fill="#f39c1f" stroke="#a3610f" strokeWidth="1.300">
      <rect x="1" y="1" width="9.500" height="9.500" rx="1.500" />
      <rect x="11.500" y="1" width="9.500" height="9.500" rx="1.500" />
      <rect x="1" y="11.500" width="9.500" height="9.500" rx="1.500" />
      <rect x="11.500" y="11.500" width="9.500" height="9.500" rx="1.500" />
      <path d="M4.200 5.800h3M14.800 5.800h3M4.200 16.200h3M14.800 16.200h3" stroke="#fff3c0" strokeWidth="3" />
    </g>
  ),
  fileCompare: (
    <g>
      <rect x="1" y="1" width="20" height="20" rx="1" fill="#ebebe6" stroke="#8c8c8c" />
      <path d="M1 1h20v5H1z" fill="#79b530" stroke="#57861f" />
      <path d="M2 14q3-6 8-5.500Q10.500 18 6 19q-3.500.5-4-5zM12 14q3-6 8-5.500.5 9.500-4 10.500-3.500.5-4-5z" fill="#f5b324" stroke="#8d5913" strokeWidth=".8" />
      <path d="M12 14q3-6 8-5.500.5 9.500-4 10.500-3.500.5-4-5z" fill="#9bd03c" stroke="#4c7a14" strokeWidth=".8" />
    </g>
  ),
  bookmark: (
    <g stroke="#0f5e6b">
      <path d="M1 1h12v15l-6-4.500L1 16z" fill="#23aab8" />
      <path d="M9.500 5.500h12v16l-6-4.500-6 4.500z" fill="#1795a3" />
      <circle cx="5.500" cy="5.500" r="2" fill="#fff" stroke="none" />
      <circle cx="15.500" cy="11" r="2.200" fill="#fff" stroke="none" />
    </g>
  ),
  ntfs: (
    <g>
      <path d="M5 4.500q1 5 6 6.500t5.500 6M17 4.500q-1 5-6 6.500t-5.500 6" fill="none" stroke="#14616d" strokeWidth="4.500" />
      <path d="M5 4.500q1 5 6 6.500M17 4.500q-1 5-6 6.500" fill="none" stroke="#5cc5cf" strokeWidth="2.500" />
      <circle cx="5" cy="4.500" r="3.500" fill="#fbab27" stroke="#8d5913" />
      <circle cx="17" cy="4.500" r="3.500" fill="#8ddbe3" stroke="#236f82" />
      <circle cx="5" cy="17.500" r="3.500" fill="#1a9aa7" stroke="#0f5763" />
      <circle cx="17" cy="17.500" r="3.500" fill="#f5a227" stroke="#8d5913" />
    </g>
  ),
  stats: (
    <g>
      <rect x="1" y="10" width="6" height="11" rx="1" fill="#b9dc4c" stroke="#6d9320" />
      <rect x="8" y="1" width="6.500" height="20" rx="1.500" fill="#fbab27" stroke="#a86a14" />
      <rect x="15" y="6" width="6" height="15" rx="1" fill="#86c232" stroke="#4c7d1a" />
    </g>
  ),
};

function Icon({ name, size = "lg" }: { name: string; size?: "lg" | "sm" }) {
  return (
    <svg viewBox="0 0 22 22" fill="none" className={clsx("shrink-0", size === "lg" ? "size-[22px]" : "size-4")} aria-hidden="true">
      {icons[name]}
    </svg>
  );
}

/* ---------- shared chrome ---------- */

function Chevron({ className = "h-[5px] w-[7px]" }: { className?: string }) {
  return (
    <svg viewBox="0 0 7 5" className={className} aria-hidden="true">
      <path d="M.5.800l3 3 3-3" fill="none" stroke="#555" />
    </svg>
  );
}

function Grip() {
  return (
    <svg viewBox="0 0 12 20" className="h-5 w-3 shrink-0" aria-hidden="true">
      {[0, 1, 2, 3, 4].map((i) => (
        <path key={i} d={`M3 ${1 + i * 4}h1.500M7 ${1 + i * 4}h1.500M5 ${3 + i * 4}h1.500`} stroke="#b5b5b5" strokeWidth="1.500" />
      ))}
    </svg>
  );
}

// "|" is a separator, "v" and "v-" are drop-down arrows, "*" marks a pressed button
function Tools({ items }: { items: string[] }) {
  return (
    <>
      {items.map((item, i) => {
        if (item === "|")
          return (
            <span key={i} className="flex w-[9px] shrink-0 justify-center">
              <span className="h-[17px] w-px bg-[#c8c8c8]" />
            </span>
          );
        if (item === "v" || item === "v-")
          return (
            <button key={i} aria-label="more" className={clsx("flex h-6 shrink-0 items-center justify-center", item === "v" ? "w-[15px]" : "w-2.5")}>
              <Chevron />
            </button>
          );
        const pressed = item.startsWith("*");
        const name = pressed ? item.slice(1) : item;
        return (
          <button key={i} aria-label={name} aria-pressed={pressed} className="flex h-7 w-[29px] shrink-0 items-center justify-center">
            <span className={clsx("flex h-7 w-7 items-center justify-center", pressed && "border border-[#1a7fd4] bg-[#35a3f7]")}>
              <Icon name={name} />
            </span>
          </button>
        );
      })}
    </>
  );
}

function PanelHeader({ title, closeColor = "#4d6f8f" }: { title: string; closeColor?: string }) {
  return (
    <header className="flex h-[21px] shrink-0 items-center border-b border-[#e6eaee] bg-[#d1d9e1] pl-1">
      <h2 className="flex-1 text-xs">{title}</h2>
      <button aria-label="pin" className="flex size-5 items-center justify-center">
        <svg viewBox="0 0 10 10" className="size-2.5" fill="none" stroke="#222">
          <path d="M5.800.700l3.500 3.500-1.500.500-1.800 1.800-.3 2L1.500 4.300l2-.3 1.800-1.800zM3.300 6.700L.5 9.500" />
        </svg>
      </button>
      <button aria-label="close" className="flex size-5 items-center justify-center">
        <svg viewBox="0 0 10 10" className="size-2.5" stroke={closeColor} strokeWidth="1.200">
          <path d="M.5.500l9 9M9.500.500l-9 9" />
        </svg>
      </button>
    </header>
  );
}

function PanelTools({ items, children }: { items: string[]; children?: ReactNode }) {
  return (
    <div className="-ml-px flex h-[29px] shrink-0 items-center overflow-hidden">
      <Tools items={items} />
      {children}
    </div>
  );
}

function Tabs({ tabs, active }: { tabs: [string, string][]; active: number }) {
  return (
    <div role="tablist" className="flex h-[21px] shrink-0 border-t border-[#bdbdbd]">
      {tabs.map(([icon, text], i) => (
        <button
          key={i}
          role="tab"
          aria-selected={i === active}
          className={clsx(
            "flex shrink-0 items-center gap-1 px-1 text-xs whitespace-nowrap",
            i === active && "-mt-px border-r border-b border-[#bdbdbd] bg-white pt-0.5",
            i === active && i > 0 && "border-l",
          )}
        >
          <Icon name={icon} size="sm" />
          {text}
        </button>
      ))}
    </div>
  );
}

/* ---------- top ---------- */

function TitleBar() {
  return (
    <header className="flex h-[29px] shrink-0 items-center bg-[#f3f3f3] pl-2">
      <Icon name="logo" size="sm" />
      <h1 className="ml-[5px] flex-1 text-xs text-[#858585]">Hex Editor Neo</h1>
      <button aria-label="minimize" className="flex h-full w-[46px] items-center justify-center">
        <span className="h-px w-2.5 bg-[#808080]" />
      </button>
      <button aria-label="maximize" className="flex h-full w-[46px] items-center justify-center">
        <span className="size-2.5 rounded-[1px] border border-[#808080]" />
      </button>
      <button aria-label="close" className="flex h-full w-[46px] items-center justify-center">
        <svg viewBox="0 0 10 10" className="size-2.5" stroke="#808080">
          <path d="M.5.500l9 9M9.500.500l-9 9" />
        </svg>
      </button>
    </header>
  );
}

const menus = ["文件(F)", "编辑(V)", "视图(V)", "书签", "注释", "宏", "工具(V)", "调试", "历史(I)", "窗口(W)", "帮助(V)"];

function MenuBar() {
  return (
    <nav className="flex h-7 shrink-0 items-center">
      <Grip />
      {menus.map((m) => (
        <button key={m} className="pr-2.5 pl-2 text-xs">
          {m}
        </button>
      ))}
    </nav>
  );
}

function MainToolbars() {
  return (
    <>
      <div className="flex h-[30px] shrink-0 items-center">
        <Grip />
        <Tools
          items={[
            "newFile", "v", "open", "v", "save", "saveAs", "saveAll", "|", "close", "closeAll", "|", "refresh", "|",
            "record", "recordStop", "|", "link", "info1fo", "txt", "chatWin", "|", "endian", "v-", "|", "expand", "|",
            "structure", "compare", "findFiles", "puzzle", "|", "comments", "|", "keys", "|", "help", "about",
          ]}
        />
        <Grip />
        <Tools items={["tools"]} />
      </div>
      <div className="flex h-[30px] shrink-0 items-center">
        <Grip />
        <Tools
          items={[
            "undo", "redo", "cut", "copy", "paste", "erase", "|", "cutOff", "copyOff", "|", "docDown", "gearDown",
            "docWidth", "|", "find", "findNext", "findPrev", "|", "replace", "|", "fill", "insertEdit", "insertFile",
            "|", "lock", "unlock", "|", "binary", "|", "columns",
          ]}
        />
        <Grip />
        <div className="relative ml-[3px] mr-1">
          <select aria-label="language" className="h-6 w-[110px] appearance-none border border-[#c8c8c8] bg-white pl-[3px] text-xs">
            <option>中文(简体)</option>
          </select>
          <Chevron className="pointer-events-none absolute top-2.5 right-1 h-[6px] w-[9px]" />
        </div>
        <Tools items={["globeAdd", "globeUser"]} />
      </div>
    </>
  );
}

/* ---------- left dock ---------- */

const dataTypes = [
  "BYTE", "USHORT", "UINT", "ULONGLONG", "char", "wchar_t", "SHORT", "INT", "LONGLONG", "float", "double", "FILETIME",
  "time_t (64-bit)", "time_t (32-bit)", "signed time_t (64-bit)", "signed time_t (32-bit)",
];

function InspectorPanel() {
  return (
    <section className="flex w-[298px] shrink-0 flex-col">
      <div className="flex flex-1 flex-col border-r border-[#bdbdbd]">
        <PanelHeader title="数据检查器" closeColor="#2f7cc0" />
        <PanelTools items={["torch", "swatches", "pencil", "hex", "|", "torchAdd", "torchDel", "torchEdit"]} />
        <div className="flex flex-1">
          <div className="flex-1 bg-white pl-[5px]">
            <table className="w-full table-fixed border-collapse text-left font-[Roboto,'Noto_Sans_CJK_SC',sans-serif] text-[11px]">
              <colgroup>
                <col className="w-[115px]" />
                <col className="w-[100px]" />
                <col />
              </colgroup>
              <thead>
                <tr className="h-6 text-xs">
                  <th className="border-r border-[#e2e2e2] pl-px font-normal">类型</th>
                  <th className="border-r border-[#e2e2e2] pl-1.5 font-normal">值</th>
                  <th />
                </tr>
              </thead>
              <tbody>
                <tr className="h-[23px]">
                  <td colSpan={3}>
                    <button className="flex w-full items-center pr-2.5 pl-2 text-xs text-[#1a3e9b]">
                      标准类型
                      <span className="mr-2 ml-1 h-px flex-1 bg-[#ccdaea]" />
                      <svg viewBox="0 0 8 6" className="h-1.5 w-2" fill="none" stroke="#0a2f8f" strokeWidth="2">
                        <path d="M1 5l3-3 3 3" />
                      </svg>
                    </button>
                  </td>
                </tr>
                {dataTypes.map((name, i) => (
                  <tr key={name} className="h-[18px] leading-4 whitespace-nowrap">
                    <td className={clsx("p-0 pl-px", i === 0 && "bg-[#f0f0f0]")}>{name}</td>
                    <td className={clsx("p-0 pl-1.5", i === 0 && "bg-[#f0f0f0]")}>N/A</td>
                    <td />
                  </tr>
                ))}
              </tbody>
            </table>
          </div>
          <div className="flex w-4 justify-center bg-[#f0f0f0] pt-4">
            <span className="h-[245px] w-0.5 bg-[#8a8a8a]" />
          </div>
        </div>
      </div>
      <Tabs
        active={4}
        tabs={[["explorer", "资..."], ["explorer", "资..."], ["volume", "卷导..."], ["base", "基..."], ["inspector", "数据检..."]]}
      />
    </section>
  );
}

/* ---------- editor ---------- */

const wavy = "underline decoration-[#f03030] decoration-wavy decoration-1 underline-offset-2 [text-decoration-skip-ink:none]";

function Editor() {
  return (
    <section className="flex min-w-0 flex-1 flex-col">
      <div className="flex h-[21px] shrink-0 items-end justify-between">
        <div role="tab" className="ml-px flex h-full items-center gap-1 bg-[#0078d7] px-1 text-xs text-white">
          <Icon name="script" size="sm" />
          新脚本 1*
          <button aria-label="close tab" className="ml-1 flex size-4 items-center justify-center">
            <svg viewBox="0 0 10 10" className="size-2.5" stroke="#fff">
              <path d="M.5.500l9 9M9.500.500l-9 9" />
            </svg>
          </button>
        </div>
        <button aria-label="tab list" className="flex h-full w-7 items-center justify-center">
          <svg viewBox="0 0 10 8" className="h-2 w-2.5" stroke="#111">
            <path d="M0 .500h8M0 3.500h10M0 6.500h8" />
          </svg>
        </button>
      </div>
      <div className="flex flex-1 border border-t-2 border-[#b5b5b5] border-t-[#5a9fdc] bg-white font-['DejaVu_Sans_Mono','Noto_Sans_CJK_SC',monospace] text-[13px] leading-[19px]">
        <ol className="flex-1">
          {[
            <><span className={wavy}>www</span>.puresys.net</>,
            <span className={clsx("text-sm leading-[19px]", wavy)}>纯净系统</span>,
            <span className={clsx("text-sm leading-[17px]", wavy)}>软件下载</span>,
          ].map((line, i) => (
            <li key={i} className="flex h-[19px]">
              <span className="w-[58px] text-right text-[#2b91af]">{i + 1}</span>
              <span className={clsx("ml-2.5 flex-1", i === 2 && "border-y-2 border-[#eee] leading-[15px]")}>{line}</span>
            </li>
          ))}
        </ol>
        <div className="relative w-3.5 border-l border-[#d5d5d5]">
          <span className="absolute top-0 right-0 h-[50px] w-[7px] bg-[#ff5a5f]" />
          <span className="absolute top-[34px] right-0 h-0.5 w-full bg-[#26267f]" />
        </div>
      </div>
    </section>
  );
}

/* ---------- right dock ---------- */

function HistoryPanel() {
  return (
    <section className="flex flex-1 flex-col">
      <div className="flex flex-1 flex-col border-x border-[#bdbdbd]">
        <PanelHeader title="历史" closeColor="#8a7440" />
        <PanelTools
          items={["histTree", "|", "trash", "|", "*tree", "*treePlus", "|", "rename", "|", "histUp", "histDown", "|", "docErase"]}
        />
        <div className="mx-px mt-0.5 mb-0.5 flex flex-1 flex-col border-2 border-[#e6e6e6] bg-[#f9f9f9] pt-6 pl-0.5">
          <div className="flex-1 bg-white" />
        </div>
      </div>
      <Tabs active={0} tabs={[["hourglass", "历史"], ["copyExport", "复制和导出"]]} />
    </section>
  );
}

function SelectionPanel() {
  return (
    <section className="flex shrink-0 flex-col">
      <div className="flex flex-col border-x border-[#bdbdbd]">
        <PanelHeader title="选择" />
        <PanelTools
          items={["selAll", "selNone", "selInvert", "selRange", "selColumn", "|", "touch", "|", "selUp", "selDown", "|"]}
        >
          <button aria-label="more tools" className="mb-2 ml-1.5 shrink-0">
            <svg viewBox="0 0 8 8" className="size-2" fill="none" stroke="#2f7cc0" strokeWidth="1.500">
              <path d="M.5.500L4 4 .5 7.500M4 .500L7.500 4 4 7.500" />
            </svg>
          </button>
        </PanelTools>
        <div className="flex flex-col gap-1.5 bg-[#f0f0f0] px-2 pt-1 pb-[15px] text-xs">
          <div className="flex flex-col">
            <button className="z-10 mx-[5px] h-[15px] rounded-[4px] border border-[#0a5a9c] bg-[#cce4f7] leading-[13px]">信息</button>
            <div className="-mt-2 border border-[#a0a0a0] px-2 pt-2.5 pb-[5px]">
              <div className="border border-[#828790] bg-white p-px">
                <table className="w-full table-fixed leading-4">
                  <colgroup>
                    <col className="w-[57px]" />
                    <col className="w-12" />
                    <col className="w-9" />
                    <col />
                  </colgroup>
                  <tbody>
                    {[["总共大小", "未选择", "字节", ""], ["选块", "未选择", "", ""], ["", "", "", ""]].map((row, i) => (
                      <tr key={i} className="h-[17px]">
                        {row.map((cell, j) => (
                          <td
                            key={j}
                            className={clsx(
                              "p-0 whitespace-nowrap border-[#ececec]",
                              j === 0 ? "pl-[5px]" : "pl-1",
                              j < 3 && "border-r",
                              i < 2 && "border-b",
                            )}
                          >
                            {cell}
                          </td>
                        ))}
                      </tr>
                    ))}
                  </tbody>
                </table>
              </div>
            </div>
          </div>
          <div className="flex items-center">
            <span className="h-[9px] w-[5px] border border-r-0 border-[#a0a0a0]" />
            <button className="h-[15px] flex-1 rounded-[4px] border border-[#c3c3c3] bg-[#fdfdfd] leading-[13px]">详细信息</button>
            <span className="h-[9px] w-[5px] border border-l-0 border-[#a0a0a0]" />
          </div>
        </div>
      </div>
      <Tabs active={0} tabs={[["selTab", "选择"], ["callStack", "调试调用堆栈"], ["watch", "调试监视"]]} />
    </section>
  );
}

/* ---------- bottom dock ---------- */

function NotesPanel() {
  return (
    <section className="flex min-w-0 flex-1 flex-col">
      <div className="flex flex-1 flex-col border-r border-[#bdbdbd]">
        <PanelHeader title="数据注释" closeColor="#6b3a82" />
        <PanelTools items={["noteAdd", "noteEdit", "noteDel", "notes", "|", "noteBox", "noteText", "|", "noteClear"]} />
        <div className="flex flex-1">
          <div className="flex-1 bg-white">
            <table className="w-full table-fixed text-xs">
              <colgroup>
                <col className="w-[22px]" />
                <col className="w-[30px]" />
                <col className="w-20" />
                <col className="w-20" />
                <col className="w-20" />
                <col />
              </colgroup>
              <thead className="bg-[#f0f0f0]">
                <tr className="h-[19px] text-right whitespace-nowrap">
                  {["", "No.", "Address", "Size", "Size (deci..."].map((h) => (
                    <th key={h} className="border-r border-[#dcdcdc] p-0 pr-[3px] font-normal">{h}</th>
                  ))}
                  <th className="p-0 pl-[3px] text-left font-normal">Text</th>
                </tr>
              </thead>
            </table>
          </div>
          <div className="flex w-4 justify-center bg-[#f0f0f0] pt-[17px]">
            <span className="h-[76px] w-0.5 bg-[#8a8a8a]" />
          </div>
        </div>
      </div>
      <Tabs
        active={0}
        tabs={[
          ["note", "数据注释"], ["pattern", "模式颜色"], ["findFiles", "文件中查找"], ["props", "文件属性"],
          ["sigma", "校验码"], ["process", "进程"], ["output", "输出"],
        ]}
      />
    </section>
  );
}

function BookmarksPanel() {
  return (
    <section className="flex min-w-0 flex-1 flex-col">
      <div className="flex flex-1 flex-col border-x border-[#bdbdbd]">
        <PanelHeader title="书签" closeColor="#8a7440" />
        <PanelTools
          items={[
            "markAdd", "|", "mark", "markPrev", "markNext", "|", "markSel", "markFrame", "|", "markUp", "markDown", "|", "up", "down",
          ]}
        />
        <div className="flex flex-1 gap-1">
          <div className="flex flex-1 flex-col bg-white">
            <table className="w-full table-fixed text-left text-xs">
              <colgroup>
                <col className="w-[50px]" />
                <col className="w-[50px]" />
                <col className="w-[50px]" />
                <col className="w-[150px]" />
                <col className="w-[65px]" />
                <col />
              </colgroup>
              <thead>
                <tr className="h-[25px]">
                  {["可见", "便签", "启动", "书签组", "书签", "颜色"].map((h, i) => (
                    <th key={h} className={clsx("p-0 pl-1.5 font-normal whitespace-nowrap", i < 5 && "border-r border-[#e2e2e2]")}>{h}</th>
                  ))}
                </tr>
              </thead>
            </table>
            <div className="mt-auto flex h-4 items-center bg-[#f0f0f0] pr-[50px] pl-[17px]">
              <span className="h-0.5 flex-1 bg-[#8a8a8a]" />
            </div>
          </div>
          <div className="mt-px w-[173px] border border-[#5a5a5a] bg-white">
            <table className="w-full table-fixed text-left text-xs">
              <thead>
                <tr className="h-6">
                  <th className="w-[100px] border-r border-[#e2e2e2] p-0 pl-[5px] font-normal">否</th>
                  <th className="p-0 pl-[5px] font-normal">地址</th>
                </tr>
              </thead>
            </table>
          </div>
        </div>
      </div>
      <Tabs
        active={3}
        tabs={[
          ["macro", "宏"], ["viewer", "结构查看器"], ["fileCompare", "文件比较"], ["bookmark", "书签"],
          ["ntfs", "NTFS 流"], ["stats", "统计"],
        ]}
      />
    </section>
  );
}

function StatusBar() {
  return (
    <footer className="flex h-[22px] shrink-0 items-stretch border-t border-[#d8d8d8] pl-1.5 text-xs">
      <span className="flex-1 self-center">就绪</span>
      <span className="w-8 border-l border-[#d8d8d8]" />
      <span className="w-8 border-l border-[#d8d8d8]" />
      <span className="flex w-[70px] items-end justify-end border-l border-[#d8d8d8] p-0.5">
        <svg viewBox="0 0 12 12" className="size-3" fill="#c0c0c0" aria-hidden="true">
          <path d="M9 0h2v2H9zM9 3h2v2H9zM6 3h2v2H6zM9 6h2v2H9zM6 6h2v2H6zM3 6h2v2H3zM9 9h2v2H9zM6 9h2v2H6zM3 9h2v2H3zM0 9h2v2H0z" />
        </svg>
      </span>
    </footer>
  );
}

export default function App() {
  return (
    <div className="min-h-screen bg-[#c9c9c9]">
      <div className="flex min-h-screen flex-col overflow-hidden rounded-lg border border-[#a9a9a9] bg-[#f5f5f5] font-['Noto_Sans','Noto_Sans_CJK_SC',sans-serif] text-black">
        <TitleBar />
        <MenuBar />
        <MainToolbars />
        <main className="flex flex-1 flex-col pt-px">
          <div className="flex flex-1 gap-[5px] pb-1.5">
            <InspectorPanel />
            <Editor />
            <div className="flex w-[279px] shrink-0 flex-col gap-[7px]">
              <HistoryPanel />
              <SelectionPanel />
            </div>
          </div>
          <div className="flex h-[187px] shrink-0 gap-1.5">
            <NotesPanel />
            <BookmarksPanel />
          </div>
        </main>
        <StatusBar />
      </div>
    </div>
  );
}
